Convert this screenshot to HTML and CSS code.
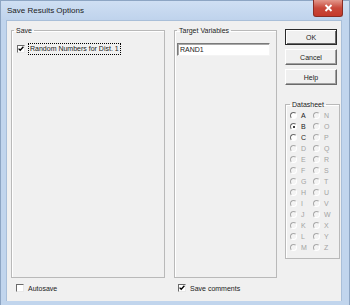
FILE: index.html
```html
<!DOCTYPE html>
<html lang="en">
<head>
    <meta charset="UTF-8" />
    <title>Save Results Options</title>
    <link rel="stylesheet" href="styles.css">
</head>
<body>
    <div class="window">
        <div class="titlebar">
            <span class="title">Save Results Options</span>
            <button class="close-btn" aria-label="Close">
                <svg width="9" height="8" viewBox="0 0 9 8"><path d="M1.5 1l6 6M7.5 1l-6 6" stroke="#fff" stroke-width="1.8"/></svg>
            </button>
        </div>

        <div class="client">
            <div class="main-row">
                <fieldset class="group save-group">
                    <legend>Save</legend>
                    <label class="check save-check">
                        <span class="box"><svg width="6" height="6" viewBox="0 0 6 6"><path d="M0.6 2.6l1.6 1.7 3.2-3.6" fill="none" stroke="#000" stroke-width="1.3"/></svg></span>
                        <span class="focus-text">Random Numbers for Dist. 1</span>
                    </label>
                </fieldset>

                <fieldset class="group target-group">
                    <legend>Target Variables</legend>
                    <input class="text-field" type="text" value="RAND1" />
                </fieldset>

                <div class="side">
                    <button class="btn default">OK</button>
                    <button class="btn">Cancel</button>
                    <button class="btn">Help</button>

                    <fieldset class="group datasheet">
                        <legend>Datasheet</legend>
                        <div class="radio-grid">
                            <span class="opt"><span class="radio"></span>A</span>
                            <span class="opt"><span class="radio checked"></span>B</span>
                            <span class="opt"><span class="radio"></span>C</span>
                            <span class="opt off"><span class="radio"></span>D</span>
                            <span class="opt off"><span class="radio"></span>E</span>
                            <span class="opt off"><span class="radio"></span>F</span>
                            <span class="opt off"><span class="radio"></span>G</span>
                            <span class="opt off"><span class="radio"></span>H</span>
                            <span class="opt off"><span class="radio"></span>I</span>
                            <span class="opt off"><span class="radio"></span>J</span>
                            <span class="opt off"><span class="radio"></span>K</span>
                            <span class="opt off"><span class="radio"></span>L</span>
                            <span class="opt off"><span class="radio"></span>M</span>
                            <span class="opt off"><span class="radio"></span>N</span>
                            <span class="opt off"><span class="radio"></span>O</span>
                            <span class="opt off"><span class="radio"></span>P</span>
                            <span class="opt off"><span class="radio"></span>Q</span>
                            <span class="opt off"><span class="radio"></span>R</span>
                            <span class="opt off"><span class="radio"></span>S</span>
                            <span class="opt off"><span class="radio"></span>T</span>
                            <span class="opt off"><span class="radio"></span>U</span>
                            <span class="opt off"><span class="radio"></span>V</span>
                            <span class="opt off"><span class="radio"></span>W</span>
                            <span class="opt off"><span class="radio"></span>X</span>
                            <span class="opt off"><span class="radio"></span>Y</span>
                            <span class="opt off"><span class="radio"></span>Z</span>
                        </div>
                    </fieldset>
                </div>
            </div>

            <div class="bottom-row">
                <label class="check autosave">
                    <span class="box"></span>
                    <span>Autosave</span>
                </label>
                <label class="check">
                    <span class="box"><svg width="6" height="6" viewBox="0 0 6 6"><path d="M0.6 2.6l1.6 1.7 3.2-3.6" fill="none" stroke="#000" stroke-width="1.3"/></svg></span>
                    <span>Save comments</span>
                </label>
            </div>
        </div>
    </div>
</body>
</html>
```

FILE: styles.css
```css
/* Reset */
* {
    box-sizing: border-box;
    margin: 0;
    padding: 0;
}

body {
    background-color: #fff;
    font-family: 'Liberation Sans', Arial, sans-serif;
    font-size: 7px;
    color: #222;
}

/* Window frame */
.window {
    width: 350px;
    height: 305px;
    display: flex;
    flex-direction: column;
    background-color: #c1d5ed;
    border: 1px solid #8da5c3;
    border-bottom: none;
}

.titlebar {
    height: 19px;
    display: flex;
    align-items: center;
    background: linear-gradient(#cfdff3, #bfd3ec);
}

.title {
    padding-left: 6px;
    font-size: 8px;
    color: #1b1b1b;
}

.close-btn {
    margin-left: auto;
    margin-right: 6px;
    align-self: flex-start;
    margin-top: -1px;
    width: 30px;
    height: 17px;
    border: 1px solid #8a2d25;
    border-top: none;
    border-radius: 0 0 3px 3px;
    background: linear-gradient(#e3988c, #c8493b 50%, #c5392b);
    display: flex;
    align-items: center;
    justify-content: center;
}

/* Client area */
.client {
    flex: 1;
    margin: 0 7px 4px 5px;
    background-color: #f0f0f0;
    border: 1px solid #a9bfd9;
    border-bottom: none;
    padding: 5px 0 0 4px;
}

.main-row {
    display: flex;
    height: 252px;
}

/* Group boxes */
.group {
    border: 1px solid #b9b9b9;
    box-shadow: inset 1px 1px #fff;
    padding: 0 2px;
    min-width: 0;
}

.group legend {
    padding: 0 2px;
    line-height: 9px;
}

.save-group {
    width: 154px;
}

.target-group {
    width: 103px;
    margin-left: 9px;
}

.check {
    display: flex;
    align-items: center;
    gap: 4px;
}

.box {
    width: 8px;
    height: 8px;
    background-color: #fff;
    border: 1px solid;
    border-color: #6a6a6a #e8e8e8 #e8e8e8 #6a6a6a;
    display: flex;
    align-items: center;
    justify-content: center;
}

.save-check {
    margin: 8px 0 0 3px;
    gap: 3px;
}

.focus-text {
    border: 1px dotted #000;
    padding: 1px;
    line-height: 8px;
}

.text-field {
    display: block;
    width: 93px;
    height: 13px;
    margin-top: 8px;
    border: 1px solid;
    border-color: #7a7a7a #f4f4f4 #f4f4f4 #7a7a7a;
    box-shadow: inset 1px 1px #a8a8a8;
    background-color: #fff;
    font-family: 'Liberation Sans', Arial, sans-serif;
    font-size: 7px;
    padding: 0 2px;
    color: #222;
}

/* Right column */
.side {
    width: 55px;
    margin-left: 8px;
    padding-top: 3px;
    display: flex;
    flex-direction: column;
    align-items: flex-start;
    gap: 4px;
}

.btn {
    width: 52px;
    height: 16px;
    background-color: #f0f0f0;
    border: 1px solid;
    border-color: #fff #6a6a6a #6a6a6a #fff;
    box-shadow: inset -1px -1px #a0a0a0;
    font-family: 'Liberation Sans', Arial, sans-serif;
    font-size: 7px;
    color: #222;
}

.btn.default {
    border-color: #2a2a2a;
    box-shadow: inset 1px 1px #fff, inset -1px -1px #6a6a6a;
}

.datasheet {
    width: 55px;
    margin-top: 11px;
    padding: 0 0 5px 4px;
}

.radio-grid {
    margin-top: 1px;
    display: grid;
    grid-template-columns: 23px 23px;
    grid-template-rows: repeat(13, 11px);
    grid-auto-flow: column;
}

.opt {
    display: flex;
    align-items: center;
    gap: 4px;
}

.opt.off {
    color: #a3a3a3;
}

.radio {
    width: 7px;
    height: 7px;
    border-radius: 50%;
    border: 1px solid;
    border-color: #6a6a6a #fff #fff #6a6a6a;
    background-color: #fff;
    position: relative;
}

.opt.off .radio {
    border-color: #a8a8a8 #fff #fff #a8a8a8;
    background-color: #f4f4f4;
}

.radio.checked::after {
    content: '';
    position: absolute;
    left: 1.5px;
    top: 1.5px;
    width: 2px;
    height: 2px;
    border-radius: 50%;
    background-color: #000;
}

/* Bottom checkboxes */
.bottom-row {
    display: flex;
    margin-top: 6px;
    padding-left: 5px;
}

.autosave {
    width: 162px;
}
```
